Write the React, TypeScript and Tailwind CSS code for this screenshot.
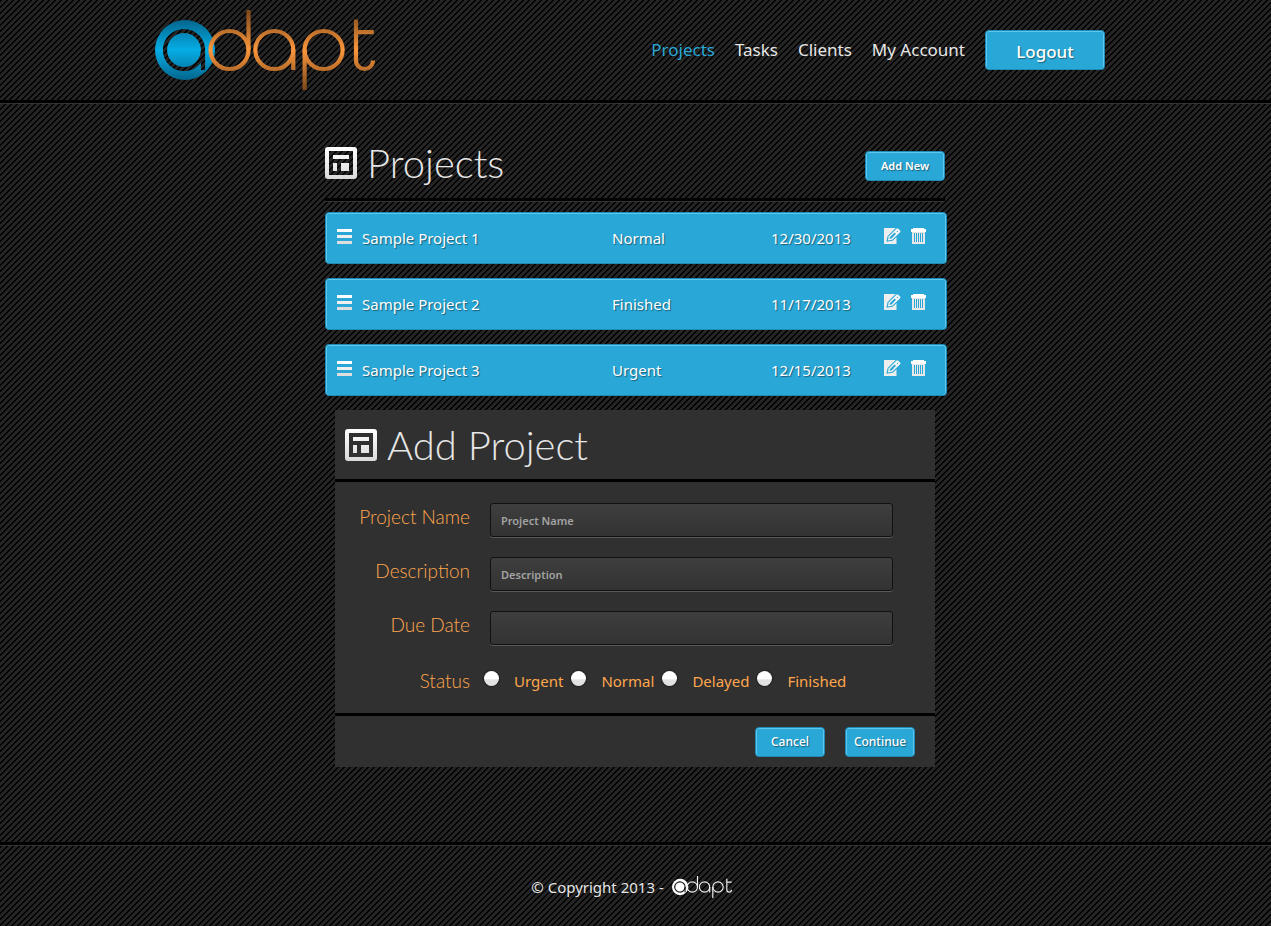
import type { ReactNode } from 'react';

const stripes =
  'bg-[#242424] bg-[linear-gradient(135deg,#000_0_21%,#242424_21%_54%,#000_54%_71%,#242424_71%)] bg-[length:6px_6px]';

const blueBox =
  'rounded-[4px] border border-[#1f8ab5] bg-[#29a7d6] text-white shadow-[inset_0_1px_0_#5cc8ee,inset_1px_0_0_#5cc8ee,inset_-1px_0_0_#5cc8ee] [text-shadow:1px_1px_1px_#1b5f7c]';

const display = "font-['Lato',sans-serif] font-light";

function Logo({ mono = false, className }: { mono?: boolean; className: string }) {
  const disc = mono ? '#ffffff' : 'url(#logo-blue)';
  const line = mono ? '#f2f2f2' : 'url(#logo-orange)';
  const maskId = mono ? 'logo-cut-mono' : 'logo-cut';
  return (
    <svg viewBox="0 0 220 80" className={className} role="img" aria-label="adapt">
      <defs>
        <linearGradient id="logo-blue" gradientUnits="userSpaceOnUse" x1="0" y1="10" x2="0" y2="70">
          <stop offset="0" stopColor="#02668d" />
          <stop offset="0.5" stopColor="#06ade6" />
          <stop offset="1" stopColor="#02668d" />
        </linearGradient>
        <linearGradient id="logo-orange" gradientUnits="userSpaceOnUse" x1="0" y1="0" x2="0" y2="80">
          <stop offset="0" stopColor="#7c4819" />
          <stop offset="0.5" stopColor="#fb963c" />
          <stop offset="1" stopColor="#7c4819" />
        </linearGradient>
        <mask id={maskId} maskUnits="userSpaceOnUse" x="0" y="0" width="220" height="80">
          <rect width="220" height="80" fill="#fff" />
          <circle cx="29" cy="40" r="19" fill="none" stroke="#000" strokeWidth="4.2" />
          <path d="M48 40V60" stroke="#000" strokeWidth="4.2" />
        </mask>
      </defs>
      <circle cx="30" cy="40" r="30" fill={disc} mask={`url(#${maskId})`} />
      <g fill="none" stroke={line} strokeWidth="4.2">
        <circle cx="74.5" cy="40" r="19" />
        <path d="M93.5 0L93.501 40" />
        <circle cx="119.3" cy="40" r="19" />
        <path d="M138.3 40L138.301 60" />
        <circle cx="168.6" cy="40" r="19" />
        <path d="M149.6 40L149.601 80" />
        <path d="M201 9.5V50.5a8.5 8.5 0 0 0 17 0M201 22.1L218.8 22.101" />
      </g>
    </svg>
  );
}

function LayoutIcon({ id }: { id: string }) {
  return (
    <svg viewBox="0 0 32 32" className="size-8 shrink-0" aria-hidden="true">
      <defs>
        <linearGradient id={id} x1="0" y1="0" x2="0" y2="1">
          <stop offset="0" stopColor="#ffffff" />
          <stop offset="1" stopColor="#d9d9d9" />
        </linearGradient>
      </defs>
      <path
        fill={`url(#${id})`}
        fillRule="evenodd"
        d="M3 0H29a3 3 0 0 1 3 3V29a3 3 0 0 1-3 3H3a3 3 0 0 1-3-3V3a3 3 0 0 1 3-3ZM4 4V28H28V4ZM8 8H24V12H8ZM8 16H12V24H8ZM16 16H24V24H16Z"
      />
    </svg>
  );
}

function MenuIcon() {
  return (
    <svg viewBox="0 0 15 15" className="size-[15px]" aria-hidden="true">
      <path fill="#fff" d="M0 0H15V3H0Z" />
      <path fill="#f0f0f0" d="M0 6H15V9H0Z" />
      <path fill="#dedede" d="M0 12H15V15H0Z" />
    </svg>
  );
}

function EditIcon() {
  return (
    <svg viewBox="0 0 17 16" className="h-4 w-[17px]" aria-hidden="true">
      <path fill="#eeeeee" d="M0 0H12.5V16H0Z" />
      <path d="M2.4 13.8L3.6 8L11.6 0H17V5.2L8.6 12.8Z" fill="#29a7d6" />
      <path d="M3.8 12.4L4.8 8.2L12.6 0.4H14L16.4 2.8V4L8.2 11.8Z" fill="#f4f4f4" />
      <path d="M5.4 10.8L6.2 8.8L10.6 4.4L12 5.8L7.6 10.4Z" fill="#29a7d6" />
      <circle cx="13.4" cy="3.4" r="0.6" fill="#29a7d6" />
    </svg>
  );
}

function TrashIcon() {
  return (
    <svg viewBox="0 0 15 16" className="h-4 w-[15px]" shapeRendering="crispEdges" aria-hidden="true">
      <path fill="#fff" d="M2 0H13V1H15V4H0V1H2Z" />
      <path fill="#e8e8e8" d="M1 4H14V16H1Z" />
      <path fill="#29a7d6" d="M3 5H4V14H3ZM5 5H6V14H5ZM7 5H8V14H7ZM9 5H10V14H9ZM11 5H12V14H11Z" />
    </svg>
  );
}

const projects = [
  { name: 'Sample Project 1', status: 'Normal', due: '12/30/2013' },
  { name: 'Sample Project 2', status: 'Finished', due: '11/17/2013' },
  { name: 'Sample Project 3', status: 'Urgent', due: '12/15/2013' },
];

const fieldLabel = `${display} w-[135px] text-right text-[19px] leading-6 text-[#ffa64d]`;

function Field({ id, label, children }: { id: string; label: string; children: ReactNode }) {
  return (
    <div className="flex h-[34px] items-center gap-5">
      <label htmlFor={id} className={`${fieldLabel} pb-[6px]`}>
        {label}
      </label>
      {children}
    </div>
  );
}

const inputStyle =
  'h-[34px] w-[403px] rounded-[3px] border border-[#111] bg-linear-to-b from-[#3e3e3e] to-[#333] px-[10px] text-[11px] font-semibold text-[#ddd] shadow-[0_1px_0_#5a5a5a] placeholder:text-[#a3a3a3]';

export default function App() {
  return (
    <div className={`${stripes} flex min-h-screen flex-col font-['Noto_Sans',sans-serif] text-[#e6e6e6]`}>
      <header className="border-b-[3px] border-black shadow-[0_1px_0_#333]">
        <div className="mx-auto flex h-[100px] max-w-[961px] items-center justify-between">
          <a href="#home">
            <Logo className="h-20 w-[220px]" />
          </a>
          <nav className="flex items-center gap-5 pr-[11px] text-[17px]">
            <a href="#projects" className="text-[#29a7d6]">Projects</a>
            <a href="#tasks">Tasks</a>
            <a href="#clients">Clients</a>
            <a href="#account">My Account</a>
            <button type="button" className={`${blueBox} h-10 w-[120px] pt-[3px] text-[17px] font-medium`}>
              Logout
            </button>
          </nav>
        </div>
      </header>

      <main className="mx-auto w-full max-w-[621px] grow pt-7 pr-px">
        <div className="flex h-[67px] items-center justify-between pb-[3px]">
          <h1 className={`${display} flex items-center gap-[10px] text-[40px] leading-[48px]`}>
            <LayoutIcon id="fade-projects" />
            Projects
          </h1>
          <button type="button" className={`${blueBox} mt-[6px] h-[30px] w-20 text-[11px] font-semibold`}>
            Add New
          </button>
        </div>
        <hr className="h-[3px] border-0 bg-black shadow-[0_1px_0_#333]" />

        <table className="mt-[11px] -mr-[2px] block">
          <tbody className="flex flex-col gap-[14px]">
            {projects.map((p) => (
              <tr
                key={p.name}
                className={`${blueBox} grid h-[52px] grid-cols-[36px_250px_159px_113px_1fr] items-center text-[15px]`}
              >
                <td className="pb-[3px] pl-[11px]">
                  <MenuIcon />
                </td>
                <td>{p.name}</td>
                <td>{p.status}</td>
                <td>{p.due}</td>
                <td className="flex gap-[10px] pb-1">
                  <button type="button" aria-label={`Edit ${p.name}`}>
                    <EditIcon />
                  </button>
                  <button type="button" aria-label={`Delete ${p.name}`}>
                    <TrashIcon />
                  </button>
                </td>
              </tr>
            ))}
          </tbody>
        </table>

        <form className="mx-[10px] mt-[14px] bg-[#303030]">
          <h2 className={`${display} flex h-[69px] items-center gap-[10px] px-[10px] text-[40px] leading-[48px]`}>
            <LayoutIcon id="fade-add" />
            Add Project
          </h2>
          <div className="flex flex-col gap-5 border-y-[3px] border-black pt-[21px] pb-[14px]">
            <Field id="name" label="Project Name">
              <input id="name" type="text" placeholder="Project Name" className={inputStyle} />
            </Field>
            <Field id="description" label="Description">
              <input id="description" type="text" placeholder="Description" className={inputStyle} />
            </Field>
            <Field id="due" label="Due Date">
              <input id="due" type="text" className={inputStyle} />
            </Field>
            <fieldset className="flex h-[34px] items-center gap-[14px] pt-1 text-[#ffa64d]">
              <legend className={`${fieldLabel} float-left`}>Status</legend>
              <div className="flex gap-2">
                {['Urgent', 'Normal', 'Delayed', 'Finished'].map((s) => (
                  <label key={s} className="flex items-center gap-[15px] text-[15px]">
                    <input
                      type="radio"
                      name="status"
                      value={s}
                      className="mb-[6px] size-[15px] appearance-none rounded-full bg-linear-to-b from-white from-50% to-[#e2e2e2] to-60% shadow-[0_0_2px_#000]"
                    />
                    {s}
                  </label>
                ))}
              </div>
            </fieldset>
          </div>
          <div className="flex justify-end gap-5 px-5 pt-[11px] pb-[10px]">
            <button type="button" className={`${blueBox} h-[30px] w-[70px] text-[12px] font-medium`}>
              Cancel
            </button>
            <button type="submit" className={`${blueBox} h-[30px] w-[70px] text-[12px] font-medium`}>
              Continue
            </button>
          </div>
        </form>
      </main>

      <footer className="flex h-[84px] items-center justify-center gap-2 border-t-[3px] border-black pt-[3px] pr-2 text-[15px] shadow-[inset_0_1px_0_#333]">
        <span>© Copyright 2013 -</span>
        <Logo mono className="h-[22px] w-[60px]" />
      </footer>
    </div>
  );
}
